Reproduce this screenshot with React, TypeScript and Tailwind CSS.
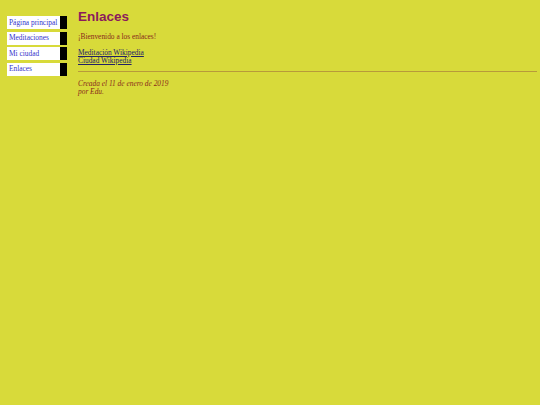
const navItems = ["Página principal", "Meditaciones", "Mi ciudad", "Enlaces"];

export default function App() {
  return (
    <div className="flex min-h-[405px] w-full bg-[#d8da3a] font-['Liberation_Serif',serif]">
      <ul className="ml-[7px] mt-[16px] flex w-[60px] shrink-0 flex-col gap-[2.5px]">
        {navItems.map((item) => (
          <li
            key={item}
            className="flex h-[13px] items-center border-r-[7px] border-black bg-white pl-[2px] text-[7.4px] leading-none text-[#3333cc]"
          >
            {item}
          </li>
        ))}
      </ul>
      <main className="ml-[11px] mr-[3px] flex-1 pt-[9px]">
        <h1 className="font-['Liberation_Sans',sans-serif] text-[13.5px] font-bold leading-[16px] text-[#8b1a5c]">
          Enlaces
        </h1>
        <p className="mt-[8px] text-[7.4px] leading-[8px] text-[#8a2a1a]">
          ¡Bienvenido a los enlaces!
        </p>
        <ul className="mt-[8px] text-[7.4px] leading-[8px]">
          <li>
            <a href="#" className="text-[#222266] underline">
              Meditación Wikipedia
            </a>
          </li>
          <li>
            <a href="#" className="text-[#222266] underline">
              Ciudad Wikipedia
            </a>
          </li>
        </ul>
        <hr className="mt-[6px] border-t border-[#b89a3a]" />
        <address className="mt-[8px] text-[7.4px] italic leading-[8px] text-[#8a2a1a]">
          Creada el 11 de enero de 2019
          <br />
          por Edu.
        </address>
      </main>
    </div>
  );
}
